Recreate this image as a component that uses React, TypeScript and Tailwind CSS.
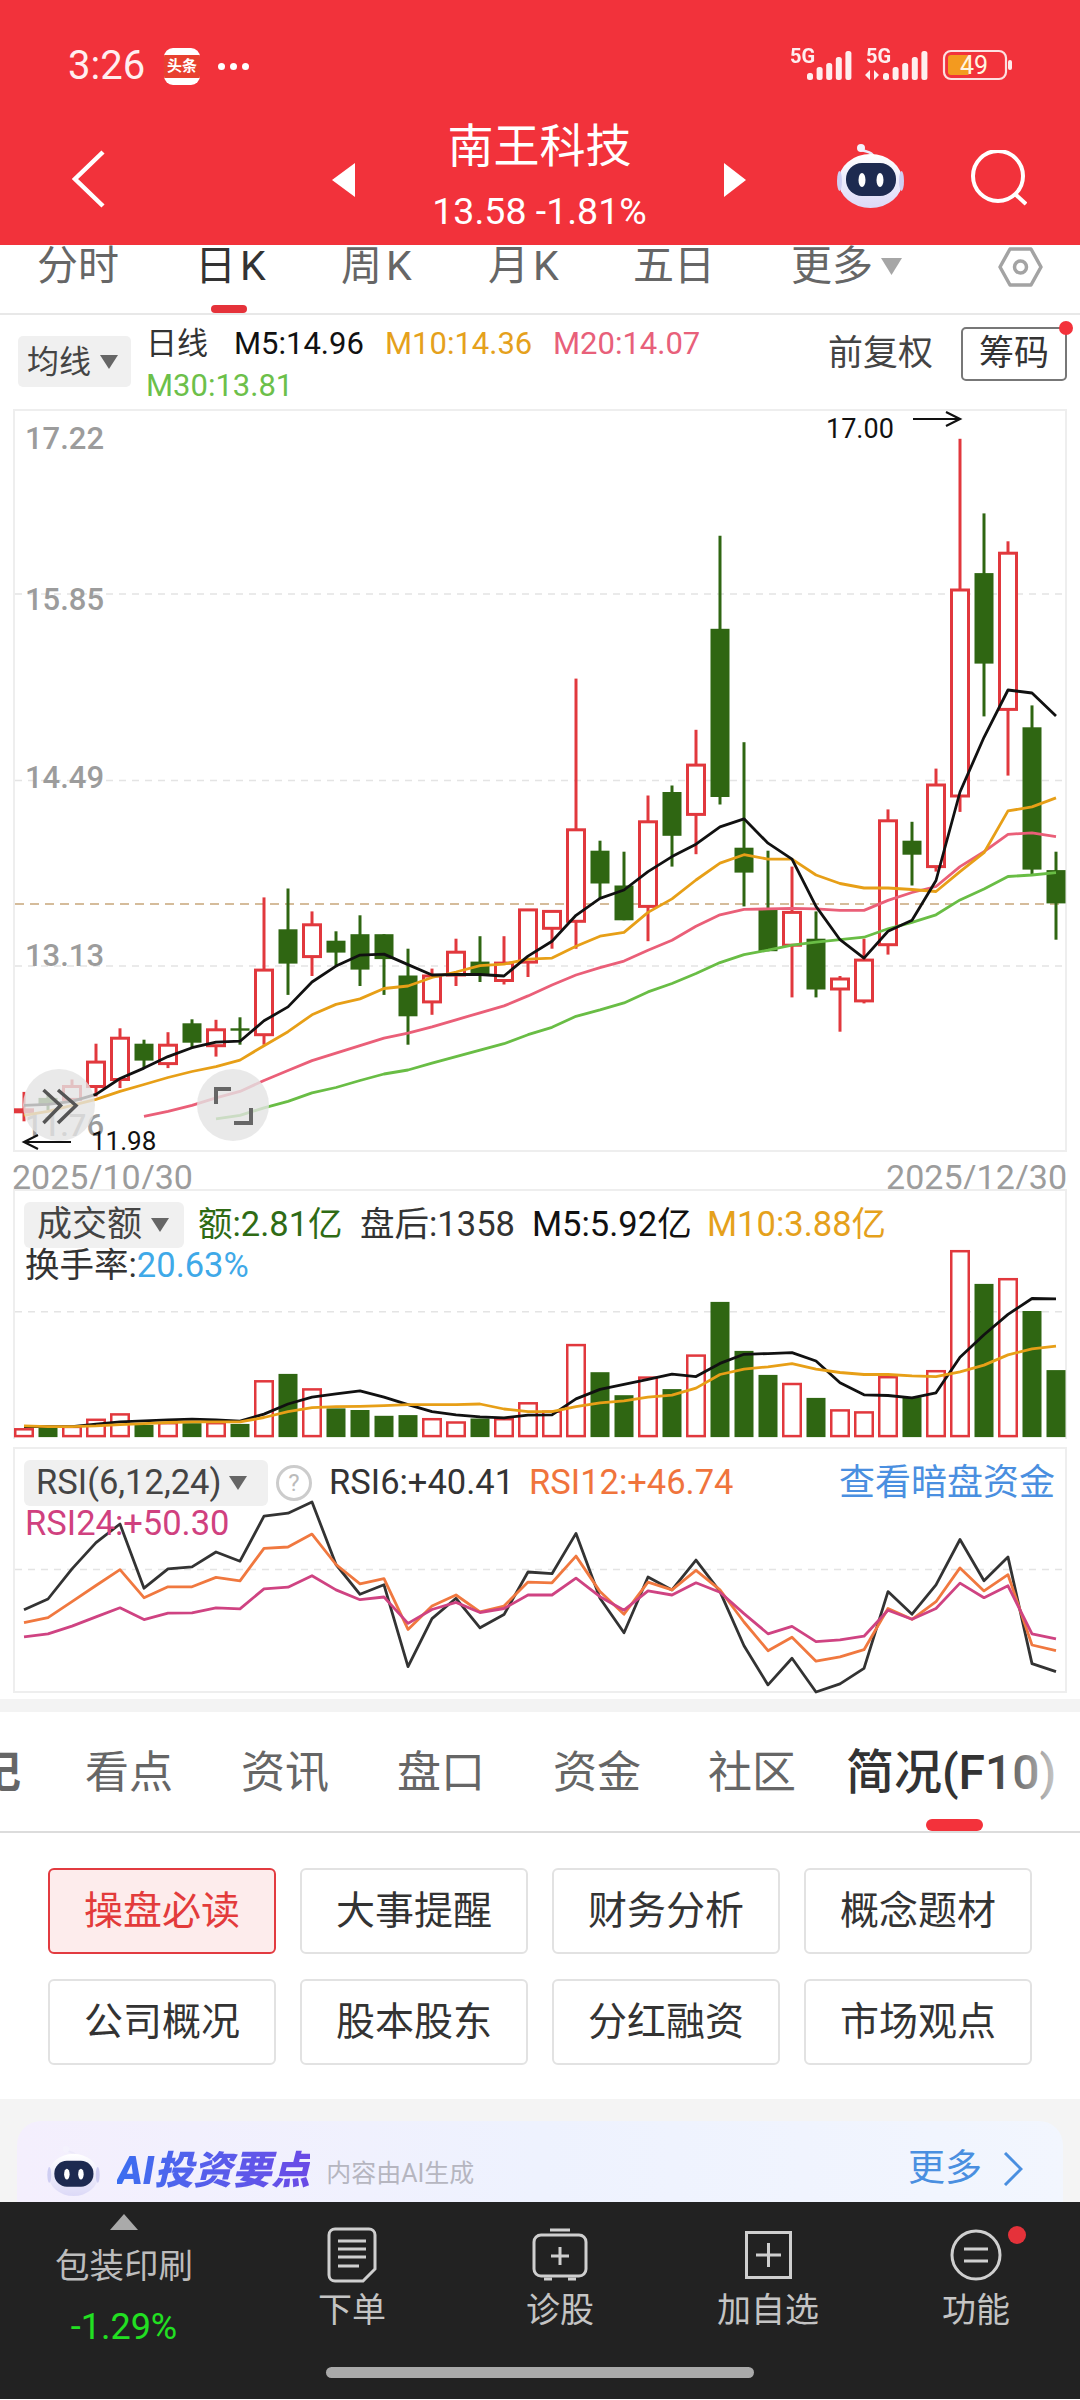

import React from "react";

const RED = "#e1383d";
const GREEN = "#2f6612";
const FONT = "Roboto, 'Noto Sans CJK SC', sans-serif";
const cx = (i: number) => 24 + 24 * i;
const my = (z: number) => +(400 + z / 2.0103).toFixed(1);
const vy = (z: number) => +(1170 + z / 2.958).toFixed(1);

// [isRed, wickTop, bodyTop, bodyBottom, wickBottom]
const CANDLES: [number, number, number, number, number][] = [
  [1, 1393, 1426, 1436, 1452], [0, 1395, 1405, 1418, 1430], [1, 1368, 1382, 1408, 1412], [1, 1296, 1333, 1382, 1402],
  [1, 1265, 1285, 1368, 1385], [0, 1288, 1296, 1330, 1345], [1, 1273, 1299, 1336, 1345], [0, 1247, 1255, 1294, 1305],
  [1, 1248, 1268, 1300, 1322], [0, 1243, 1265, 1270, 1298], [1, 1002, 1148, 1278, 1298], [0, 984, 1066, 1135, 1198],
  [1, 1030, 1057, 1121, 1160], [0, 1070, 1089, 1113, 1142], [0, 1038, 1076, 1147, 1180], [0, 1076, 1076, 1126, 1198],
  [0, 1105, 1159, 1241, 1298], [1, 1145, 1160, 1212, 1238], [1, 1085, 1112, 1158, 1180], [0, 1080, 1131, 1160, 1172],
  [1, 1080, 1134, 1169, 1177], [1, 1027, 1027, 1132, 1162], [1, 1030, 1030, 1064, 1105], [1, 562, 866, 1050, 1105],
  [0, 888, 908, 974, 1005], [0, 910, 978, 1048, 1048], [1, 797, 850, 1020, 1090], [0, 777, 790, 878, 940],
  [1, 665, 736, 835, 915], [0, 275, 462, 800, 815], [0, 690, 902, 952, 1020], [0, 908, 1027, 1110, 1110],
  [1, 940, 1032, 1098, 1203], [0, 1030, 1085, 1187, 1203], [1, 1160, 1166, 1186, 1272], [1, 1085, 1128, 1210, 1215],
  [1, 825, 848, 1097, 1117], [0, 850, 888, 916, 978], [1, 743, 776, 940, 950], [1, 80, 384, 798, 830],
  [0, 230, 350, 532, 638], [1, 286, 310, 624, 757], [0, 616, 660, 946, 955], [0, 910, 947, 1014, 1087],
];
const MA5 = [1420,1418,1412,1398,1366,1345,1322,1304,1293,1291,1250,1222,1172,1140,1118,1116,1137,1158,1157,1157,1160,1120,1090,1038,1004,987,950,920,895,860,844,893,925,1020,1087,1124,1070,1048,968,790,680,585,591,637];
const MA10 = [1440,1432,1420,1408,1392,1378,1364,1352,1342,1329,1300,1272,1238,1217,1206,1185,1180,1163,1152,1139,1136,1126,1124,1100,1080,1072,1032,1005,967,933,916,925,925,957,974,983,983,986,990,950,912,828,820,802];
const MA20 = [1442,1432,1420,1405,1392,1370,1350,1330,1315,1300,1285,1275,1262,1248,1234,1220,1200,1178,1158,1143,1130,1108,1088,1060,1037,1026,1025,1024,1025,1028,1028,1008,992,980,940,910,875,872,880];
const MA30 = [1447,1440,1425,1412,1395,1384,1370,1357,1349,1335,1322,1309,1296,1278,1263,1241,1228,1214,1192,1175,1155,1133,1117,1108,1098,1092,1087,1082,1065,1052,1037,1007,985,960,957,952];
const VOL = [770,765,763,742,726,757,752,752,752,754,628,606,652,708,713,730,728,740,750,738,740,693,718,521,601,669,617,651,552,393,538,609,636,677,714,720,616,675,598,243,340,326,420,595];
const VMA5 = [762,762,762,755,748,745,742,740,742,746,725,695,675,665,656,675,697,718,727,733,736,728,727,680,652,637,622,607,614,575,548,546,543,568,632,668,670,677,662,557,490,430,383,384];
const VMA10 = [760,762,762,760,756,753,750,748,748,748,735,718,706,703,702,700,697,697,697,695,710,718,718,703,692,686,675,669,648,608,592,585,576,592,602,608,608,612,614,600,580,550,532,524];
const RSI6 = [1304,1272,1183,1105,1050,1240,1183,1177,1133,1160,1027,1018,985,1170,1258,1230,1472,1330,1270,1357,1318,1192,1197,1078,1270,1372,1207,1245,1157,1250,1410,1526,1447,1547,1523,1477,1250,1317,1230,1096,1218,1148,1463,1487];
const RSI12 = [1342,1327,1280,1232,1185,1268,1236,1236,1208,1218,1122,1118,1080,1170,1227,1212,1362,1293,1260,1310,1293,1222,1224,1145,1250,1317,1222,1245,1187,1245,1340,1425,1385,1456,1443,1422,1300,1332,1280,1180,1248,1200,1408,1425];
const RSI24 = [1384,1375,1352,1325,1298,1333,1314,1313,1298,1301,1242,1237,1203,1245,1274,1266,1344,1303,1282,1312,1300,1260,1260,1210,1265,1305,1248,1260,1224,1252,1315,1375,1353,1398,1393,1382,1305,1332,1300,1225,1268,1233,1375,1390];

const pts = (arr: number[], start: number, f: (z: number) => number) =>
  arr.map((z, i) => `${cx(i + start)},${f(z)}`).join(" ");

function Line({ d, c, w = 2.8 }: { d: string; c: string; w?: number }) {
  return <polyline points={d} fill="none" stroke={c} strokeWidth={w} strokeLinejoin="round" />;
}

function PriceLabel({ y, t }: { y: number; t: string }) {
  return (
    <text x={25} y={y} fontSize={31} fontWeight={500} fill="#9c9c9c" fontFamily={FONT}>
      {t}
    </text>
  );
}

function MainChart() {
  return (
    <svg className="block overflow-visible" width={1050} height={738} viewBox="15 412 1050 738">
      {[595, 781.5, 967].map((y) => (
        <line key={y} x1={15} x2={1065} y1={y} y2={y} stroke="#e4e4e4" strokeWidth={1.5} strokeDasharray="7 6" />
      ))}
      <line x1={15} x2={1065} y1={905} y2={905} stroke="#c7a67b" strokeWidth={1.5} strokeDasharray="9 6" />
      <PriceLabel y={450} t="17.22" />
      <PriceLabel y={611} t="15.85" />
      <PriceLabel y={789} t="14.49" />
      <PriceLabel y={967} t="13.13" />
      <PriceLabel y={1137} t="11.76" />
      {CANDLES.map(([r, wt, bt, bb, wb], i) => {
        const x = cx(i);
        if (i === 0)
          return (
            <g key={i}>
              <line x1={x} x2={x} y1={my(wt)} y2={my(wb)} stroke={RED} strokeWidth={3} />
              <rect x={x - 10} y={my(bt)} width={20} height={my(bb) - my(bt)} fill={RED} />
            </g>
          );
        return r ? (
          <g key={i}>
            <line x1={x} x2={x} y1={my(wt)} y2={my(bt)} stroke={RED} strokeWidth={3} />
            <line x1={x} x2={x} y1={my(bb)} y2={my(wb)} stroke={RED} strokeWidth={3} />
            <rect x={x - 8.5} y={my(bt)} width={17} height={my(bb) - my(bt)} fill="#fff" stroke={RED} strokeWidth={3} />
          </g>
        ) : (
          <g key={i}>
            <line x1={x} x2={x} y1={my(wt)} y2={my(wb)} stroke={GREEN} strokeWidth={3} />
            <rect x={x - 9.5} y={my(bt)} width={19} height={my(bb) - my(bt)} fill={GREEN} />
          </g>
        );
      })}
      <Line d={pts(MA30, 8, my)} c="#69bd45" />
      <Line d={pts(MA20, 5, my)} c="#ea5f78" />
      <Line d={pts(MA10, 0, my)} c="#e79f17" />
      <Line d={pts(MA5, 0, my)} c="#111111" />
      <text x={826} y={439} fontSize={27} fill="#111" fontFamily={FONT}>17.00</text>
      <path d="M913 420H959M946 413L960 420L946 427" fill="none" stroke="#111" strokeWidth={2.2} />
      <text x={91} y={1151} fontSize={26} fill="#111" fontFamily={FONT}>11.98</text>
      <path d="M71 1143H25M38 1136L24 1143L38 1150" fill="none" stroke="#111" strokeWidth={2.2} />
    </svg>
  );
}

function VolumeChart() {
  const base = vy(790);
  return (
    <svg className="block overflow-visible" width={1050} height={246} viewBox="15 1192 1050 246">
      <line x1={15} x2={1065} y1={1312.7} y2={1312.7} stroke="#e4e4e4" strokeWidth={1.5} strokeDasharray="7 6" />
      {VOL.map((z, i) => {
        const x = cx(i);
        const red = CANDLES[i][0];
        return red ? (
          <rect key={i} x={x - 8.75} y={vy(z)} width={17.5} height={base - vy(z)} fill="#fff" stroke={RED} strokeWidth={2.5} />
        ) : (
          <rect key={i} x={x - 9.5} y={vy(z)} width={19} height={base - vy(z) + 1} fill={GREEN} />
        );
      })}
      <Line d={pts(VMA5, 0, vy)} c="#111111" />
      <Line d={pts(VMA10, 0, vy)} c="#e79f17" />
    </svg>
  );
}

function RsiChart() {
  return (
    <svg className="block overflow-visible" width={1050} height={242} viewBox="15 1450 1050 242">
      <line x1={15} x2={1065} y1={1570.6} y2={1570.6} stroke="#e4e4e4" strokeWidth={1.5} strokeDasharray="7 6" />
      <Line d={pts(RSI6, 0, vy)} c="#333333" />
      <Line d={pts(RSI12, 0, vy)} c="#f0783f" />
      <Line d={pts(RSI24, 0, vy)} c="#cf4382" />
    </svg>
  );
}

function Robot({ className, id }: { className: string; id: string }) {
  return (
    <svg className={className} viewBox="0 0 67 64">
      <defs>
        <linearGradient id={id} x1="0" y1="0" x2="0" y2="1">
          <stop offset="0" stopColor="#ffffff" />
          <stop offset="1" stopColor="#dcd9f7" />
        </linearGradient>
      </defs>
      <path d="M24 5C28 9 34 6 37 13" fill="none" stroke="#ece9fa" strokeWidth={2.5} />
      <circle cx={24} cy={4} r={4} fill="#f4f2fd" />
      <ellipse cx={33.5} cy={37} rx={32} ry={27} fill={`url(#${id})`} />
      <ellipse cx={2.5} cy={37} rx={2.5} ry={10} fill="#cfcef2" />
      <ellipse cx={64.5} cy={37} rx={2.5} ry={10} fill="#cfcef2" />
      <rect x={9} y={19} width={50} height={33} rx={16} fill="#1d2a50" />
      <ellipse cx={25} cy={36} rx={3.5} ry={7} fill="#fff" />
      <ellipse cx={43} cy={36} rx={3.5} ry={7} fill="#fff" />
    </svg>
  );
}

function StatusIcons() {
  const tops = [26, 20, 16, 10, 4];
  const bars = (x0: number) =>
    tops.map((t, k) => <rect key={k} x={x0 + k * 9.6} y={t} width={6} height={33 - t} rx={2.5} fill="#fff" opacity={0.92} />);
  return (
    <svg width={222} height={38} viewBox="0 0 222 38" className="block overflow-visible">
      <text x={0} y={16} fontSize={20} fontWeight={700} fill="#fff" opacity={0.92} fontFamily={FONT}>5G</text>
      <g>{bars(17)}</g>
      <text x={76} y={16} fontSize={20} fontWeight={700} fill="#fff" opacity={0.92} fontFamily={FONT}>5G</text>
      <path d="M80 23L75 28L80 33ZM84 23L89 28L84 33Z" fill="#fff" opacity={0.92} />
      <g>{bars(93)}</g>
      <rect x={154} y={4} width={62} height={28} rx={7} fill="none" stroke="#fff" strokeWidth={2.2} opacity={0.85} />
      <rect x={158} y={8} width={22} height={20} rx={3} fill="#f39a1f" />
      <rect x={218} y={13} width={4} height={10} rx={2} fill="#fff" opacity={0.9} />
      <text x={184} y={27} fontSize={25} textAnchor="middle" fill="#fff6e0" fontFamily={FONT}>49</text>
    </svg>
  );
}

function Caret({ className, color = "#666" }: { className?: string; color?: string }) {
  return (
    <svg className={className} width={18} height={14} viewBox="0 0 18 14">
      <path d="M0 0H18L9 14Z" fill={color} />
    </svg>
  );
}

const KTABS: [string, string, string, boolean][] = [
  ["分时", "", "w-[158px]", false],
  ["日", "K", "w-[146px]", true],
  ["周", "K", "w-[147px]", false],
  ["月", "K", "w-[145px]", false],
  ["五日", "", "w-[158px]", false],
];

const LOWER = ["操盘必读", "大事提醒", "财务分析", "概念题材", "公司概况", "股本股东", "分红融资", "市场观点"];

export default function App() {
  return (
    <div className="w-[1080px] h-[2400px] overflow-hidden flex flex-col bg-white text-[#333] [font-family:Roboto,'Noto_Sans_CJK_SC',sans-serif]">
      {/* header */}
      <header className="h-[245px] shrink-0 bg-[#f2323b] text-white flex flex-col pt-[47px]">
        <div className="h-[38px] flex items-center pl-[68px]">
          <span className="w-[77px] text-[40px] leading-none text-[#ffeef0]">3:26</span>
          <div className="ml-[19px] w-[36px] h-[37px] rounded-[9px] bg-white flex items-center justify-center overflow-hidden">
            <span className="w-full h-[23px] bg-[#e8402f] text-white text-[15px] font-bold leading-[23px] text-center whitespace-nowrap">头条</span>
          </div>
          <span className="ml-[18px] flex gap-[5px]">
            <i className="w-[7px] h-[7px] rounded-full bg-white" />
            <i className="w-[7px] h-[7px] rounded-full bg-white" />
            <i className="w-[7px] h-[7px] rounded-full bg-white" />
          </span>
          <div className="ml-auto mr-[68px]"><StatusIcons /></div>
        </div>
        <div className="mt-[40px] h-[102px] flex items-center">
          <svg className="ml-[72px] w-[33px] h-[58px] mt-[6px]" viewBox="0 0 33 58">
            <path d="M31 2L3 29L31 56" fill="none" stroke="#fff" strokeWidth={4.5} />
          </svg>
          <svg className="ml-[227px] w-[23px] h-[34px] mt-[8px]" viewBox="0 0 23 34"><path d="M23 0V34L0 17Z" fill="#fff" /></svg>
          <div className="w-[369px] flex flex-col items-center">
            <div className="text-[46px] leading-[46px] h-[46px]">南王科技</div>
            <div className="text-[37.5px] leading-[37px] h-[37px] mt-[24px] whitespace-nowrap">13.58 -1.81%</div>
          </div>
          <svg className="w-[22px] h-[34px] mt-[8px]" viewBox="0 0 22 34"><path d="M0 0V34L22 17Z" fill="#fff" /></svg>
          <Robot id="robot-head" className="ml-[91px] w-[67px] h-[64px]" />
          <svg className="ml-[67px] w-[56px] h-[56px] mt-[4px]" viewBox="0 0 56 56">
            <ellipse cx={27} cy={26} rx={25} ry={25} fill="none" stroke="#fff" strokeWidth={4} />
            <path d="M44 44L55 54" stroke="#fff" strokeWidth={4} />
          </svg>
        </div>
      </header>

      {/* period tabs */}
      <nav className="h-[70px] shrink-0 flex pl-[37px] border-b-2 border-[#e8e8e8]">
        {KTABS.map(([t, k, w, active]) => (
          <div key={t} className={w + " flex flex-col"}>
            <div className={active ? "h-[43px] text-[41px] leading-[43px] text-[#333]" : "h-[43px] text-[41px] leading-[43px] text-[#666]"}>
              {t}
              {k && <span className="ml-[4px]">{k}</span>}
            </div>
            {active && <div className="mt-[17px] ml-[16px] w-[36px] h-[9px] rounded-full bg-[#e5323a]" />}
          </div>
        ))}
        <div className="flex h-[43px] text-[41px] leading-[43px] text-[#666] items-center">
          更多
          <svg className="ml-[8px]" width={21} height={17} viewBox="0 0 21 17"><path d="M0 0H21L10.5 17Z" fill="#a6a6a6" /></svg>
        </div>
        <svg className="ml-auto mr-[37px] mt-[2px]" width={45} height={40} viewBox="0 0 45 40">
          <path d="M12 2H33L43 20L33 38H12L2 20Z" fill="none" stroke="#a3a3a3" strokeWidth={3.5} strokeLinejoin="round" />
          <circle cx={22.5} cy={20} r={6} fill="none" stroke="#a3a3a3" strokeWidth={3.5} />
        </svg>
      </nav>

      {/* MA legend */}
      <section className="h-[94px] shrink-0 flex pl-[18px]">
        <div className="mt-[21px] w-[113px] h-[51px] rounded-[5px] bg-[#f0f0f0] flex items-center pl-[9px] text-[32px] text-[#444]">
          均线<Caret className="ml-[9px]" />
        </div>
        <div className="ml-[15px] mt-[8px] flex flex-col text-[31px] leading-[42px] whitespace-nowrap">
          <div className="flex h-[42px]">
            <span className="w-[88px] text-[#333]">日线</span>
            <span className="w-[151px] text-[#111]">M5:14.96</span>
            <span className="w-[168px] text-[#e5a11c]">M10:14.36</span>
            <span className="text-[#e8607a]">M20:14.07</span>
          </div>
          <div className="h-[42px] text-[#6cc04a]">M30:13.81</div>
        </div>
        <div className="ml-auto mt-[20px] h-[38px] text-[35px] leading-[38px] text-[#444]">前复权</div>
        <div className="relative ml-[28px] mr-[13px] mt-[12px] w-[106px] h-[54px] rounded-[5px] border-2 border-[#777] flex items-center justify-center text-[35px] text-[#333]">
          筹码
          <span className="absolute -right-[8px] -top-[8px] w-[14px] h-[14px] rounded-full bg-[#f3323b]" />
        </div>
      </section>

      {/* main chart */}
      <div className="relative mx-[13px] h-[743px] shrink-0 border-2 border-[#eeeeee]">
        <MainChart />
        <div className="absolute left-[8px] top-[658px] w-[72px] h-[72px] rounded-full bg-[#e3e3e3]/80 flex items-center justify-center">
          <svg width={72} height={72} viewBox="0 0 72 72">
            <path d="M20.5 21L37.5 36.5L20.5 54M35 21L53 36.5L35 54" fill="none" stroke="#555" strokeWidth={3.5} />
          </svg>
        </div>
        <div className="absolute left-[182px] top-[658px] w-[72px] h-[72px] rounded-full bg-[#e3e3e3]/80">
          <svg width={72} height={72} viewBox="0 0 72 72">
            <path d="M19 35V20H34M37 54H54V39" fill="none" stroke="#666" strokeWidth={4} />
          </svg>
        </div>
      </div>

      {/* dates */}
      <div className="h-[37px] shrink-0 mx-[13px] pt-[13px] flex justify-between items-center text-[34px] leading-[24px] text-[#9c9c9c]">
        <span className="-ml-[1px]">2025/10/30</span>
        <span>2025/12/30</span>
      </div>

      {/* volume */}
      <div className="relative mx-[13px] h-[250px] shrink-0 border-x-2 border-t-2 border-[#eeeeee]">
        <VolumeChart />
        <div className="absolute left-[9px] top-[11px] flex flex-col text-[34.5px] whitespace-nowrap">
          <div className="flex items-center h-[46px]">
            <div className="w-[160px] h-[46px] rounded-[6px] bg-[#f0f0f0] flex items-center pl-[13px] text-[35px] text-[#444]">
              成交额<Caret className="ml-[9px]" />
            </div>
            <span className="ml-[14px] w-[162px] text-[#2f6b15]">额:2.81亿</span>
            <span className="w-[172px] text-[#333]">盘后:1358</span>
            <span className="w-[175px] text-[#111]">M5:5.92亿</span>
            <span className="text-[#e5a11c]">M10:3.88亿</span>
          </div>
          <div className="h-[34px] leading-[34px] ml-[1px] text-[#333]">
            换手率:<span className="text-[#3fa9e8]">20.63%</span>
          </div>
        </div>
      </div>

      {/* rsi */}
      <div className="relative mt-[8px] mx-[13px] h-[246px] shrink-0 border-2 border-[#eeeeee]">
        <RsiChart />
        <div className="absolute left-[9px] right-[10px] top-[11px] flex flex-col text-[34.5px] whitespace-nowrap">
          <div className="flex items-center h-[46px]">
            <div className="w-[244px] h-[46px] rounded-[6px] bg-[#f0f0f0] flex items-center pl-[12px] text-[#444]">
              RSI(6,12,24)<Caret className="ml-[8px]" />
            </div>
            <span className="ml-[8px] w-[36px] h-[36px] rounded-full border-[3px] border-[#ccc] flex items-center justify-center text-[24px] text-[#bbb]">?</span>
            <span className="ml-[17px] w-[200px] text-[#333]">RSI6:+40.41</span>
            <span className="text-[#f0743c]">RSI12:+46.74</span>
            <span className="ml-auto text-[36px] text-[#4a8fe0]">查看暗盘资金</span>
          </div>
          <div className="h-[34px] leading-[34px] ml-[1px] text-[#d0417f]">RSI24:+50.30</div>
        </div>
      </div>

      <div className="h-[6px] shrink-0 bg-white" />
      <div className="h-[13px] shrink-0 bg-[#f3f3f3]" />

      {/* section tabs */}
      <nav className="relative h-[121px] shrink-0 flex items-center overflow-hidden border-b-2 border-[#dcdcdc] text-[#666] whitespace-nowrap">
        <span className="ml-[-23px] mt-[3px] w-[108px] text-[44px] leading-none font-bold">记</span>
        <span className="w-[156px] mt-[3px] text-[44px] leading-none">看点</span>
        <span className="w-[156px] mt-[3px] text-[44px] leading-none">资讯</span>
        <span className="w-[156px] mt-[3px] text-[44px] leading-none">盘口</span>
        <span className="w-[155px] mt-[3px] text-[44px] leading-none">资金</span>
        <span className="w-[138px] mt-[3px] text-[44px] leading-none">社区</span>
        <span className="mt-[3px] text-[48px] leading-none font-medium text-[#333]">简况(F10)</span>
        <span className="absolute right-0 top-0 bottom-0 w-[90px] bg-gradient-to-r from-white/0 to-white" />
        <span className="absolute left-[926px] bottom-0 w-[57px] h-[12px] rounded-full bg-[#f3323b]" />
      </nav>

      {/* buttons */}
      <section className="h-[266px] shrink-0 pt-[35px] pl-[48px] grid grid-cols-[repeat(4,228px)] grid-rows-[repeat(2,86px)] gap-x-[24px] gap-y-[25px] content-start">
        {LOWER.map((t, i) => (
          <div
            key={t}
            className={
              i === 0
                ? "rounded-[6px] border-2 border-[#e23b40] bg-[#fdecec] text-[#e33b3b] text-[39px] flex items-center justify-center"
                : "rounded-[6px] border-2 border-[#e2e2e2] text-[#333] text-[39px] flex items-center justify-center"
            }
          >
            {t}
          </div>
        ))}
      </section>

      {/* AI card */}
      <section className="h-[103px] shrink-0 bg-[#f4f4f4] pt-[22px] px-[17px] overflow-hidden">
        <div className="h-[120px] rounded-t-[24px] bg-gradient-to-r from-[#f4effd] via-[#eef2fe] to-[#f2f6fe] flex items-start pl-[30px] pr-[40px] pt-[25px]">
          <Robot id="robot-ai" className="w-[53px] h-[50px]" />
          <span className="ml-[17px] mt-[3px] h-[44px] text-[39px] leading-[44px] font-black italic whitespace-nowrap bg-gradient-to-r from-[#3a6ef0] to-[#6a4ae6] bg-clip-text text-transparent">AI投资要点</span>
          <span className="ml-[16px] mt-[11px] text-[25px] leading-[34px] text-[#b6b6c0] whitespace-nowrap">内容由AI生成</span>
          <span className="ml-auto mt-[3px] text-[37px] leading-[40px] text-[#4a8fe0]">更多</span>
          <svg className="ml-[21px] mt-[6px]" width={20} height={34} viewBox="0 0 20 34">
            <path d="M2 1L18 17L2 33" fill="none" stroke="#4a8fe0" strokeWidth={3} />
          </svg>
        </div>
      </section>

      {/* bottom bar */}
      <footer className="h-[197px] shrink-0 bg-[#222222] flex flex-col text-[#c4c4c4]">
        <div className="h-[165px] flex">
          <div className="w-[248px] flex flex-col items-center pt-[12px]">
            <svg width={28} height={16} viewBox="0 0 28 16"><path d="M14 0L28 16H0Z" fill="#aaaaaa" /></svg>
            <div className="mt-[16px] h-[40px] text-[34.5px] leading-[40px] text-[#bdbdbd]">包装印刷</div>
            <div className="mt-[21px] h-[40px] text-[36px] leading-[40px] text-[#22e022]">-1.29%</div>
          </div>
          <div className="w-[208px] flex flex-col items-center pt-[24px]">
            <div className="h-[58px] flex items-center">
              <svg width={50} height={56} viewBox="0 0 50 56">
                <path d="M8 2H42C45 2 48 4 48 8V42L36 54H8C5 54 2 52 2 48V8C2 4 5 2 8 2Z" fill="none" stroke="#cfcfcf" strokeWidth={3} />
                <path d="M11 14H39M11 22H39M11 30H39M11 39H32" stroke="#cfcfcf" strokeWidth={3} />
              </svg>
            </div>
            <div className="mt-[6px] h-[40px] text-[34px] leading-[40px]">下单</div>
          </div>
          <div className="w-[208px] flex flex-col items-center pt-[24px]">
            <div className="h-[58px] flex items-center">
              <svg width={56} height={54} viewBox="0 0 56 54">
                <rect x={2} y={7} width={52} height={41} rx={7} fill="none" stroke="#cfcfcf" strokeWidth={3} />
                <path d="M18 2H38M12 51H20M36 51H44M28 19V37M19 28H37" stroke="#cfcfcf" strokeWidth={3} />
              </svg>
            </div>
            <div className="mt-[6px] h-[40px] text-[34px] leading-[40px]">诊股</div>
          </div>
          <div className="w-[208px] flex flex-col items-center pt-[24px]">
            <div className="h-[58px] flex items-center">
              <svg width={47} height={48} viewBox="0 0 47 48">
                <rect x={1.5} y={1.5} width={44} height={45} fill="none" stroke="#cfcfcf" strokeWidth={3} />
                <path d="M23.5 12V36M11 24H36" stroke="#cfcfcf" strokeWidth={3} />
              </svg>
            </div>
            <div className="mt-[6px] h-[40px] text-[34px] leading-[40px]">加自选</div>
          </div>
          <div className="relative w-[208px] flex flex-col items-center pt-[24px]">
            <span className="absolute left-[136px] top-[24px] w-[18px] h-[18px] rounded-full bg-[#e5323a]" />
            <div className="h-[58px] flex items-center">
              <svg width={52} height={52} viewBox="0 0 52 52">
                <circle cx={26} cy={26} r={24} fill="none" stroke="#cfcfcf" strokeWidth={3} />
                <path d="M14 20H38M14 32H38" stroke="#cfcfcf" strokeWidth={3} />
              </svg>
            </div>
            <div className="mt-[6px] h-[40px] text-[34px] leading-[40px]">功能</div>
          </div>
        </div>
        <div className="ml-[326px] w-[428px] h-[11px] rounded-full bg-[#aaaaaa]" />
      </footer>
    </div>
  );
}
